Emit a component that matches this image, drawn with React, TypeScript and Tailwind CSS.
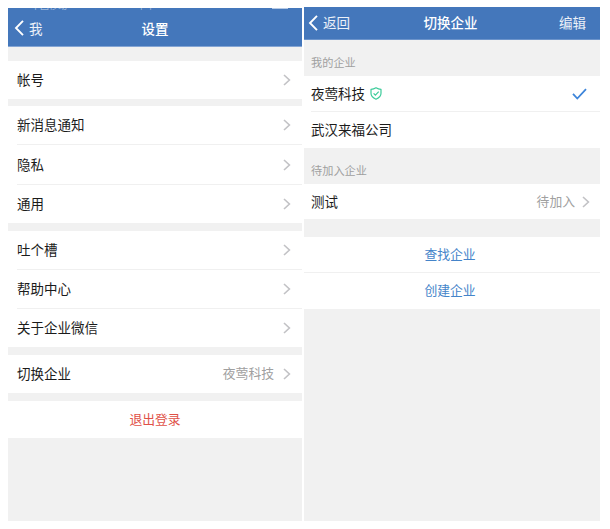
import type { ReactNode } from "react";

function Chevron() {
  return (
    <svg viewBox="0 0 8 12" className="h-3 w-2 shrink-0" fill="none" stroke="#c2c2c5" strokeWidth="1.6">
      <path d="M1 1 6.400 6 1 11" />
    </svg>
  );
}

function Back() {
  return (
    <svg viewBox="0 0 10 16" className="h-4 w-2.5 shrink-0" fill="none" stroke="#fff" strokeWidth="1.9">
      <path d="M9 0.900 2 8l7 7.100" />
    </svg>
  );
}

function Shield() {
  return (
    <svg viewBox="0 0 12 13" className="ml-[5px] h-[13px] w-3 shrink-0" fill="none" stroke="#3ccb9a" strokeWidth="1.2">
      <path d="M6 .8C7.600 1.800 9.200 2.300 11 2.400v3.900c0 2.800-2 4.700-5 5.900C3 11 1 9.100 1 6.300V2.400C2.800 2.300 4.400 1.800 6 .8Z" strokeLinejoin="round" />
      <path d="m3.600 6.300 1.800 1.800 3.300-3.400" />
    </svg>
  );
}

function Item({ label, value, height = "h-[39px]", line }: { label: string; value?: string; height?: string; line?: boolean }) {
  return (
    <div className={`flex bg-white pl-[9px] ${height}`}>
      <div className={`flex flex-1 items-center pr-[11px] ${line ? "border-b border-[#f0f0f0]" : ""}`}>
        <span className="flex-1 pb-0.5">{label}</span>
        {value && <span className="mr-[9px] pb-0.5 text-[12.8px] text-[#a0a0a0]">{value}</span>}
        <Chevron />
      </div>
    </div>
  );
}

function Caption({ children }: { children: ReactNode }) {
  return <div className="flex h-9 items-end pb-1.5 pl-[7px] text-[11.2px] leading-4 text-[#a0a0a0]">{children}</div>;
}

function Settings() {
  return (
    <section className="mt-2 h-[513px] w-[294px] bg-[#f1f1f1]">
      <header className="h-[39px] border-b border-[#84a5d4] bg-[#4477bb] text-white">
        <div className="flex h-[2px] items-end overflow-hidden pl-[23px] text-[9px] leading-[9px] text-white/50">
          <span className="w-[106px]">中国移动</span>
          <span className="w-[135px]">下午</span>
          <span className="mb-px h-px w-4 bg-white/60" />
        </div>
        <div className="grid h-[37px] grid-cols-[1fr_auto_1fr] items-center pb-px pl-1.5">
          <div className="flex items-center gap-[5px]">
            <Back />
            <span className="text-white/90">我</span>
          </div>
          <h1 className="pr-1.5 font-medium">设置</h1>
        </div>
      </header>
      <div className="pt-3.5">
        <Item label="帐号" height="h-[38px]" />
      </div>
      <div className="pt-[7px]">
        <Item label="新消息通知" line />
        <Item label="隐私" height="h-10" line />
        <Item label="通用" height="h-[38px]" />
      </div>
      <div className="pt-2">
        <Item label="吐个槽" line />
        <Item label="帮助中心" line />
        <Item label="关于企业微信" height="h-[38px]" />
      </div>
      <div className="pt-2">
        <Item label="切换企业" value="夜莺科技" height="h-[38px]" />
      </div>
      <div className="pt-2">
        <button className="block h-[37px] w-full bg-white pb-0.5 text-[12.8px] text-[#df5147]">退出登录</button>
      </div>
    </section>
  );
}

function Switcher() {
  return (
    <section className="mt-[7px] h-[514px] w-[296px] bg-[#f1f1f1]">
      <header className="grid h-[33px] grid-cols-[1fr_auto_1fr] items-center border-b border-[#6c94cb] bg-[#4477bb] pr-3.5 pl-1 text-white">
        <div className="flex items-center gap-[5px]">
          <Back />
          <span className="pb-0.5 text-white/90">返回</span>
        </div>
        <h1 className="pb-0.5 pl-[7px] font-medium">切换企业</h1>
        <span className="pb-0.5 text-right text-white/90">编辑</span>
      </header>
      <Caption>我的企业</Caption>
      <div className="bg-white pl-[7px]">
        <div className="flex h-9 items-center border-b border-[#f0f0f0] pr-[13px]">
          <span className="pb-0.5">夜莺科技</span>
          <Shield />
          <svg viewBox="0 0 15 12" className="ml-auto h-3 w-[15px]" fill="none" stroke="#3d85da" strokeWidth="1.8">
            <path d="m1 5.800 4.300 4.700L14 1.200" />
          </svg>
        </div>
        <div className="flex h-9 items-center pb-0.5">武汉来福公司</div>
      </div>
      <Caption>待加入企业</Caption>
      <div className="flex h-[35px] items-center bg-white pr-2.5 pl-[7px]">
        <span className="flex-1 pb-0.5">测试</span>
        <span className="mr-[7px] pb-0.5 text-[12.8px] text-[#a0a0a0]">待加入</span>
        <Chevron />
      </div>
      <div className="pt-[18px] text-[12.8px] text-[#4484c9]">
        <button className="block h-9 w-full border-b border-[#f0f0f0] bg-white pr-1 pb-0.5">查找企业</button>
        <button className="block h-9 w-full bg-white pr-1 pb-0.5">创建企业</button>
      </div>
    </section>
  );
}

export default function App() {
  return (
    <main className="flex h-[529px] w-[610px] gap-0.5 overflow-hidden bg-white pl-2 font-['Noto_Sans_CJK_SC',sans-serif] text-[13.5px] leading-5 text-[#1b1b1b]">
      <Settings />
      <Switcher />
    </main>
  );
}
